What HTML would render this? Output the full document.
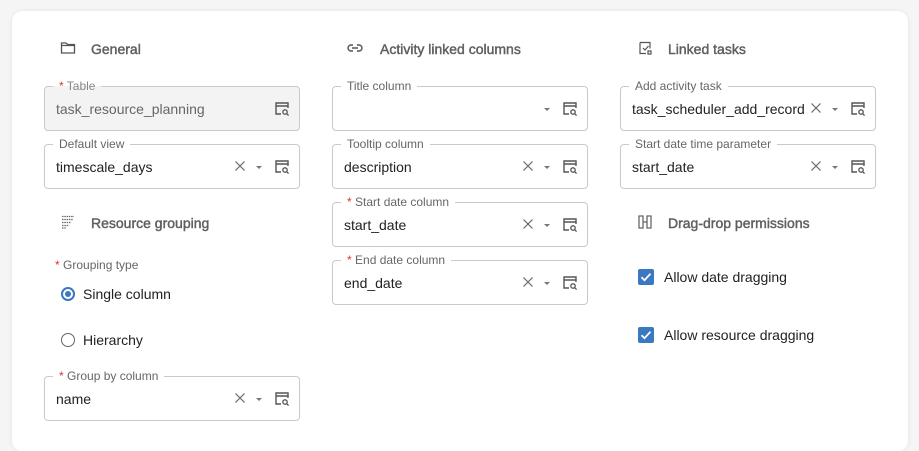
<!DOCTYPE html>
<html><head><style>
*{box-sizing:border-box;margin:0;padding:0}
body{width:919px;height:434px;background:#f5f5f5;font-family:"Liberation Sans",Arial,sans-serif;position:relative;overflow:hidden}
.card{position:absolute;left:12px;top:11px;width:896px;height:440px;background:#fff;border-radius:10px;box-shadow:0 0 4px rgba(0,0,0,.08)}
.h{position:absolute;font-size:14px;font-weight:normal;-webkit-text-stroke:0.45px #5f5f5f;color:#5f5f5f}
.hi{position:absolute;width:16px;height:16px}
.f{position:absolute;width:256px;height:45px;border:1px solid #c9c9c9;border-radius:4px;background:#fff}
.f.dis{background:#f3f3f3}
.f .l{position:absolute;left:8px;top:-8px;background:#fff;padding:0 6px;font-size:12px;color:#666;line-height:14px}
.f.dis .l{background:linear-gradient(#fff 50%,#f3f3f3 50%);color:#888}
.f .v{position:absolute;left:11px;top:14px;font-size:14px;color:#222}
.f.dis .v{color:#666}
.r{color:#d33}
.x{position:absolute;top:15px;width:12px;height:12px}
.c{position:absolute;top:21px;width:0;height:0;border-left:3.5px solid transparent;border-right:3.5px solid transparent;border-top:3.5px solid #777}
.s{position:absolute;top:14px;width:16px;height:16px}
.t{position:absolute;font-size:14px;color:#222}
.cb{position:absolute;width:16px;height:16px;background:#3b78c2;border-radius:2px}
</style></head><body>
<div class="card"></div>

<svg class="hi" style="left:60px;top:40px" viewBox="0 0 16 16"><path d="M1.5 3h4.5l1.5 1.5h7v8.5h-13z M1.5 5.5h13" fill="none" stroke="#555" stroke-width="1.3"/></svg>
<div class="h" style="left:91px;top:41px">General</div>
<svg class="hi" style="left:347px;top:40px" viewBox="0 0 16 16"><path d="M6 5H4a3 3 0 0 0 0 6h2M10 5h2a3 3 0 0 1 0 6h-2M5 8h6" fill="none" stroke="#555" stroke-width="1.4"/></svg>
<div class="h" style="left:380px;top:41px">Activity linked columns</div>
<svg class="hi" style="left:637px;top:40px" viewBox="0 0 16 16"><path d="M3 2.5h10v6M3 2.5v11h6M6 8l2 2 3.5-4M11 11h3v3h-3z" fill="none" stroke="#555" stroke-width="1.2"/></svg>
<div class="h" style="left:668px;top:41px">Linked tasks</div>
<svg class="hi" style="left:60px;top:214px" viewBox="0 0 16 16"><path d="M2 2.5h12M2 5.5h11M2 8.5h9M2 11.5h7M2 14h4" stroke="#666" stroke-width="1.2" stroke-dasharray="1.5 .8"/></svg>
<div class="h" style="left:91px;top:215px">Resource grouping</div>
<svg class="hi" style="left:637px;top:214px" viewBox="0 0 16 16"><path d="M2 2h4v12H2zM10 2h4v12h-4zM6 8h4" fill="none" stroke="#666" stroke-width="1.3"/></svg>
<div class="h" style="left:668px;top:215px">Drag-drop permissions</div>

<div class="f dis" style="left:44px;top:86px"><div class="l"><span class="r">* </span>Table</div><div class="v">task_resource_planning</div>
<svg class="s" style="left:229px" viewBox="0 0 16 16"><path d="M7 13H2V2h12v5M2 5h12" fill="none" stroke="#555" stroke-width="1.4"/><circle cx="11" cy="11" r="2.2" fill="none" stroke="#555" stroke-width="1.3"/><path d="M12.6 12.6l2 2" stroke="#555" stroke-width="1.3"/></svg></div>

<div class="f" style="left:44px;top:144px"><div class="l">Default view</div><div class="v">timescale_days</div>
<svg class="x" style="left:189px" viewBox="0 0 12 12"><path d="M1.5 1.5l9 9M10.5 1.5l-9 9" stroke="#666" stroke-width="1.2"/></svg><div class="c" style="left:211px"></div>
<svg class="s" style="left:229px" viewBox="0 0 16 16"><path d="M7 13H2V2h12v5M2 5h12" fill="none" stroke="#555" stroke-width="1.4"/><circle cx="11" cy="11" r="2.2" fill="none" stroke="#555" stroke-width="1.3"/><path d="M12.6 12.6l2 2" stroke="#555" stroke-width="1.3"/></svg></div>

<div style="position:absolute;left:55px;top:258px;font-size:12px;color:#666"><span class="r">* </span>Grouping type</div>
<div style="position:absolute;left:61px;top:287px;width:14px;height:14px;border:2px solid #3b78c2;border-radius:50%"><div style="position:absolute;left:2px;top:2px;width:6px;height:6px;background:#3b78c2;border-radius:50%"></div></div>
<div class="t" style="left:83px;top:286px">Single column</div>
<div style="position:absolute;left:61px;top:333px;width:14px;height:14px;border:1.5px solid #666;border-radius:50%"></div>
<div class="t" style="left:83px;top:332px">Hierarchy</div>

<div class="f" style="left:44px;top:376px"><div class="l"><span class="r">* </span>Group by column</div><div class="v">name</div>
<svg class="x" style="left:189px" viewBox="0 0 12 12"><path d="M1.5 1.5l9 9M10.5 1.5l-9 9" stroke="#666" stroke-width="1.2"/></svg><div class="c" style="left:211px"></div>
<svg class="s" style="left:229px" viewBox="0 0 16 16"><path d="M7 13H2V2h12v5M2 5h12" fill="none" stroke="#555" stroke-width="1.4"/><circle cx="11" cy="11" r="2.2" fill="none" stroke="#555" stroke-width="1.3"/><path d="M12.6 12.6l2 2" stroke="#555" stroke-width="1.3"/></svg></div>

<div class="f" style="left:332px;top:86px"><div class="l">Title column</div>
<div class="c" style="left:211px"></div>
<svg class="s" style="left:229px" viewBox="0 0 16 16"><path d="M7 13H2V2h12v5M2 5h12" fill="none" stroke="#555" stroke-width="1.4"/><circle cx="11" cy="11" r="2.2" fill="none" stroke="#555" stroke-width="1.3"/><path d="M12.6 12.6l2 2" stroke="#555" stroke-width="1.3"/></svg></div>

<div class="f" style="left:332px;top:144px"><div class="l">Tooltip column</div><div class="v">description</div>
<svg class="x" style="left:189px" viewBox="0 0 12 12"><path d="M1.5 1.5l9 9M10.5 1.5l-9 9" stroke="#666" stroke-width="1.2"/></svg><div class="c" style="left:211px"></div>
<svg class="s" style="left:229px" viewBox="0 0 16 16"><path d="M7 13H2V2h12v5M2 5h12" fill="none" stroke="#555" stroke-width="1.4"/><circle cx="11" cy="11" r="2.2" fill="none" stroke="#555" stroke-width="1.3"/><path d="M12.6 12.6l2 2" stroke="#555" stroke-width="1.3"/></svg></div>

<div class="f" style="left:332px;top:202px"><div class="l"><span class="r">* </span>Start date column</div><div class="v">start_date</div>
<svg class="x" style="left:189px" viewBox="0 0 12 12"><path d="M1.5 1.5l9 9M10.5 1.5l-9 9" stroke="#666" stroke-width="1.2"/></svg><div class="c" style="left:211px"></div>
<svg class="s" style="left:229px" viewBox="0 0 16 16"><path d="M7 13H2V2h12v5M2 5h12" fill="none" stroke="#555" stroke-width="1.4"/><circle cx="11" cy="11" r="2.2" fill="none" stroke="#555" stroke-width="1.3"/><path d="M12.6 12.6l2 2" stroke="#555" stroke-width="1.3"/></svg></div>

<div class="f" style="left:332px;top:260px"><div class="l"><span class="r">* </span>End date column</div><div class="v">end_date</div>
<svg class="x" style="left:189px" viewBox="0 0 12 12"><path d="M1.5 1.5l9 9M10.5 1.5l-9 9" stroke="#666" stroke-width="1.2"/></svg><div class="c" style="left:211px"></div>
<svg class="s" style="left:229px" viewBox="0 0 16 16"><path d="M7 13H2V2h12v5M2 5h12" fill="none" stroke="#555" stroke-width="1.4"/><circle cx="11" cy="11" r="2.2" fill="none" stroke="#555" stroke-width="1.3"/><path d="M12.6 12.6l2 2" stroke="#555" stroke-width="1.3"/></svg></div>

<div class="f" style="left:620px;top:86px"><div class="l">Add activity task</div><div class="v">task_scheduler_add_record</div>
<svg class="x" style="left:189px" viewBox="0 0 12 12"><path d="M1.5 1.5l9 9M10.5 1.5l-9 9" stroke="#666" stroke-width="1.2"/></svg><div class="c" style="left:211px"></div>
<svg class="s" style="left:229px" viewBox="0 0 16 16"><path d="M7 13H2V2h12v5M2 5h12" fill="none" stroke="#555" stroke-width="1.4"/><circle cx="11" cy="11" r="2.2" fill="none" stroke="#555" stroke-width="1.3"/><path d="M12.6 12.6l2 2" stroke="#555" stroke-width="1.3"/></svg></div>

<div class="f" style="left:620px;top:144px"><div class="l">Start date time parameter</div><div class="v">start_date</div>
<svg class="x" style="left:189px" viewBox="0 0 12 12"><path d="M1.5 1.5l9 9M10.5 1.5l-9 9" stroke="#666" stroke-width="1.2"/></svg><div class="c" style="left:211px"></div>
<svg class="s" style="left:229px" viewBox="0 0 16 16"><path d="M7 13H2V2h12v5M2 5h12" fill="none" stroke="#555" stroke-width="1.4"/><circle cx="11" cy="11" r="2.2" fill="none" stroke="#555" stroke-width="1.3"/><path d="M12.6 12.6l2 2" stroke="#555" stroke-width="1.3"/></svg></div>

<div class="cb" style="left:638px;top:269px"><svg width="16" height="16" viewBox="0 0 16 16"><path d="M3.5 8.2l3 3 6-6.5" fill="none" stroke="#fff" stroke-width="1.8"/></svg></div>
<div class="t" style="left:664px;top:269px">Allow date dragging</div>
<div class="cb" style="left:638px;top:327px"><svg width="16" height="16" viewBox="0 0 16 16"><path d="M3.5 8.2l3 3 6-6.5" fill="none" stroke="#fff" stroke-width="1.8"/></svg></div>
<div class="t" style="left:664px;top:327px">Allow resource dragging</div>
</body></html>
